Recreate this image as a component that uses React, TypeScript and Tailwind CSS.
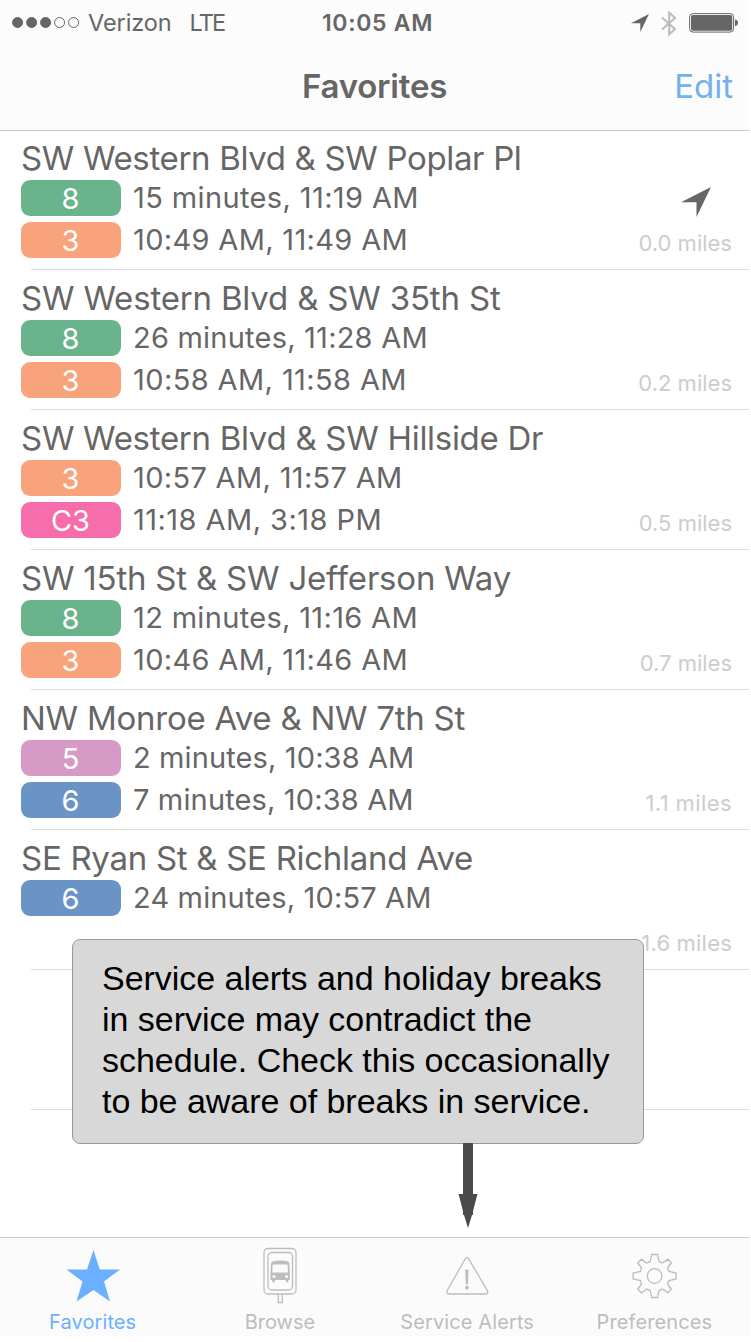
import type { ReactNode } from "react";

type Arrival = { route: string; color: string; times: string; tracking: string };
type Stop = {
  name: string;
  tracking: string;
  arrivals: Arrival[];
  miles: string;
  milesTracking?: string;
  nearest?: boolean;
};

const GREEN = "bg-[#69b48d]";
const ORANGE = "bg-[#f8a37b]";
const PINK = "bg-[#f76dab]";
const MAUVE = "bg-[#d79ac6]";
const BLUE = "bg-[#6a94c6]";

const stops: Stop[] = [
  {
    name: "SW Western Blvd & SW Poplar Pl",
    tracking: "tracking-[-0.34px]",
    miles: "0.0 miles",
    nearest: true,
    arrivals: [
      { route: "8", color: GREEN, times: "15 minutes, 11:19 AM", tracking: "tracking-[0.38px]" },
      { route: "3", color: ORANGE, times: "10:49 AM, 11:49 AM", tracking: "tracking-[0.33px]" },
    ],
  },
  {
    name: "SW Western Blvd & SW 35th St",
    tracking: "tracking-[-0.18px]",
    miles: "0.2 miles",
    arrivals: [
      { route: "8", color: GREEN, times: "26 minutes, 11:28 AM", tracking: "tracking-[0.22px]" },
      { route: "3", color: ORANGE, times: "10:58 AM, 11:58 AM", tracking: "tracking-[0.4px]" },
    ],
  },
  {
    name: "SW Western Blvd & SW Hillside Dr",
    tracking: "tracking-[-0.29px]",
    miles: "0.5 miles",
    arrivals: [
      { route: "3", color: ORANGE, times: "10:57 AM, 11:57 AM", tracking: "tracking-[0.33px]" },
      { route: "C3", color: PINK, times: "11:18 AM, 3:18 PM", tracking: "tracking-[0.45px]" },
    ],
  },
  {
    name: "SW 15th St & SW Jefferson Way",
    tracking: "tracking-[-0.21px]",
    miles: "0.7 miles",
    arrivals: [
      { route: "8", color: GREEN, times: "12 minutes, 11:16 AM", tracking: "tracking-[0.33px]" },
      { route: "3", color: ORANGE, times: "10:46 AM, 11:46 AM", tracking: "tracking-[0.33px]" },
    ],
  },
  {
    name: "NW Monroe Ave & NW 7th St",
    tracking: "tracking-[-0.25px]",
    miles: "1.1 miles",
    milesTracking: "tracking-[0.4px]",
    arrivals: [
      { route: "5", color: MAUVE, times: "2 minutes, 10:38 AM", tracking: "tracking-[0.12px]" },
      { route: "6", color: BLUE, times: "7 minutes, 10:38 AM", tracking: "tracking-[0.15px]" },
    ],
  },
  {
    name: "SE Ryan St & SE Richland Ave",
    tracking: "tracking-[-0.29px]",
    miles: "1.6 miles",
    milesTracking: "tracking-[0.2px]",
    arrivals: [{ route: "6", color: BLUE, times: "24 minutes, 10:57 AM", tracking: "tracking-[0.15px]" }],
  },
];

function LocationArrow({ className }: { className: string }) {
  return (
    <svg viewBox="0 0 30 30" className={className} fill="currentColor">
      <path d="M30 0 15.500 30V15.300H0Z" />
    </svg>
  );
}

function StatusBar() {
  return (
    <div className="grid h-[46px] grid-cols-3 items-center pl-3 pr-[10px] text-[#666]">
      <div className="flex items-center">
        <svg viewBox="0 0 68 12" className="h-3 w-[68px]" fill="currentColor" stroke="currentColor">
          <circle cx="5.600" cy="5.500" r="5" />
          <circle cx="19.600" cy="5.500" r="5" />
          <circle cx="33.600" cy="5.500" r="5" />
          <circle cx="47.600" cy="5.500" r="5" fill="none" />
          <circle cx="61.600" cy="5.500" r="5" fill="none" />
        </svg>
        <span className="ml-2 text-[23.500px] tracking-[-0.1px]">Verizon</span>
        <span className="ml-[18px] text-[23.500px] tracking-[-1.900px]">LTE</span>
      </div>
      <div className="pl-1 text-center text-[23px] font-semibold tracking-[0.700px]">10:05 AM</div>
      <div className="flex items-center justify-end">
        <LocationArrow className="h-[18px] w-[18px]" />
        <svg viewBox="0 0 16 27" className="ml-3 h-[27px] w-4 text-[#bbb]" fill="none" stroke="currentColor" strokeWidth="2">
          <path d="M1 7.500 14 19 8.200 24.500V2.500L14 8 1 19.500" />
        </svg>
        <svg viewBox="0 0 50 20" className="ml-3 h-5 w-[50px]" fill="currentColor">
          <rect x="0.600" y="0.600" width="44" height="18.500" rx="3.500" fill="none" stroke="currentColor" strokeWidth="1" />
          <rect x="2" y="2" width="41.200" height="15.700" rx="2" />
          <path d="M46 6.500C50 6.500 50 13 46 13Z" />
        </svg>
      </div>
    </div>
  );
}

function StopRow({ stop }: { stop: Stop }) {
  return (
    <li className="flex h-[140px] flex-col">
      <div className="flex flex-1 justify-between pl-[21px] pr-[17px]">
        <div className="flex flex-col whitespace-nowrap">
          <h2 className={`h-[50px] text-[33px] leading-[56px] ${stop.tracking}`}>{stop.name}</h2>
          <div className="flex flex-col gap-1.5">
            {stop.arrivals.map((a) => (
              <div key={a.times} className="flex h-9 items-center gap-3 text-[29px]">
                <span className={`h-9 w-[100px] rounded-[9px] pr-px text-center text-[29px] leading-[37px] text-white ${a.color}`}>
                  {a.route}
                </span>
                <span className={`leading-[38px] ${a.tracking}`}>{a.times}</span>
              </div>
            ))}
          </div>
        </div>
        <div className="flex flex-col items-end justify-end pb-3">
          {stop.nearest && <LocationArrow className="mb-3 mr-[21px] h-[30px] w-[30px]" />}
          <span className={`whitespace-nowrap text-[22px] leading-7 text-[#ccc] ${stop.milesTracking ?? "tracking-normal"}`}>
            {stop.miles}
          </span>
        </div>
      </div>
      <div className="ml-[31px] h-px bg-[#dcdcdc]" />
    </li>
  );
}

function Tab({ label, active, children, tracking }: { label: string; active?: boolean; children: ReactNode; tracking: string }) {
  return (
    <div className={`flex flex-1 flex-col items-center pr-[2px] ${active ? "text-[#6bb0ff]" : "text-[#bdbdbd]"}`}>
      <svg viewBox="-30 -38 60 76" className="h-[76px] w-[60px] shrink-0" fill="none" stroke="currentColor" strokeWidth="1.3">
        {children}
      </svg>
      <span className={`-mt-1 whitespace-nowrap text-[20px] leading-6 ${tracking}`}>{label}</span>
    </div>
  );
}

export default function App() {
  return (
    <div className="h-[1342px] w-[751px] bg-white font-['Inter',sans-serif] text-[#666]">
      <div className="relative flex h-[1336px] w-[749px] flex-col overflow-hidden">
        <header className="h-[131px] shrink-0 border-b border-[#c9c9c9] bg-[#fcfcfc]">
          <StatusBar />
          <div className="grid h-[82px] grid-cols-3 items-center px-4">
            <span />
            <h1 className="text-center text-[33px] font-semibold tracking-[-0.2px]">Favorites</h1>
            <span className="text-right text-[33px] text-[#72b0ee]">Edit</span>
          </div>
        </header>

        <ul className="-mt-px flex-1">
          {stops.map((s) => (
            <StopRow key={s.name} stop={s} />
          ))}
          <li className="flex h-[140px] items-end pl-[31px]">
            <div className="h-px flex-1 bg-[#dcdcdc]" />
          </li>
        </ul>

        <nav className="flex h-[99px] shrink-0 border-t border-[#c9c9c9] bg-[#fbfbfb]">
          <Tab label="Favorites" active tracking="tracking-[0.1px]">
            <path stroke="none" fill="currentColor" d="M.4-26 6.800-6.500H27L11 5.500 17 25.500.4 14-16.500 25.500-10.500 5.500-26.500-6.500H-6Z" />
          </Tab>
          <Tab label="Browse" tracking="tracking-[0px]">
            <rect x="-16" y="-27.500" width="32" height="45.500" rx="4" />
            <rect x="-12" y="-23.500" width="24.500" height="37.500" rx="4" />
            <path d="M-1.700 18V26.500H2.300V18" />
            <path
              fill="currentColor"
              stroke="none"
              fillRule="evenodd"
              d="M-7.500-14.500Q.3-16.500 8-14.500 9.300-14 9.300-12L9.800-4V4H8.500Q8.500 6.500 7 6.500 5.500 6.500 5.500 4H-5Q-5 6.500-6.500 6.500-8 6.500-8 4H-9.500V-4L-9-12Q-9-14-7.500-14.500ZM-7.300-11.500-7.800-3.500H8L7.500-11.500ZM-6-1A1.500 1.500 0 1 0-6 2 1.500 1.500 0 1 0-6-1ZM6.500-1A1.500 1.500 0 1 0 6.500 2 1.500 1.500 0 1 0 6.500-1Z"
            />
          </Tab>
          <Tab label="Service Alerts" tracking="tracking-[0.12px]">
            <path d="M-1.700-17.200Q0-19.500 1.700-17.200L20.500 14.800Q21.500 18 18.500 18H-18Q-21-18 18-20 14.800Z" className="hidden" />
            <path d="M-1.700-17.200Q0-19.500 1.700-17.200L20.500 14.800Q21.500 18 18.500 18H-18Q-21 18-20 14.800Z" />
            <path d="M-1.700-6.500H1.500L1 8.500H-1.200Z" fill="currentColor" stroke="none" />
            <circle cx="-.1" cy="11.700" r="1.900" fill="currentColor" stroke="none" />
          </Tab>
          <Tab label="Preferences" tracking="tracking-[0.1px]">
            <g transform="translate(.6 0)">
              <path d="M-3-21.500H3L4.500-14.300 8-13 13.300-16.800 16.800-13.300 13-8 14.300-4.500 21.500-3V3L14.300 4.500 13 8 16.800 13.300 13.300 16.800 8 13 4.500 14.300 3 21.500H-3L-4.500 14.300-8 13-13.300 16.800-16.800 13.300-13 8-14.300 4.500-21.500 3V-3L-14.300-4.500-13-8-16.800-13.300-13.300-16.800-8-13-4.500-14.300Z" />
              <circle r="7.300" />
            </g>
          </Tab>
        </nav>

        <div className="absolute left-[72px] top-[939px] h-[205px] w-[572px] rounded-lg border border-[#999] bg-[#d8d8d8] pl-[29px] pt-[18px] font-['Liberation_Sans',sans-serif] text-[34px] leading-[41px] tracking-[-0.03px] text-black">
          <p className="whitespace-nowrap">Service alerts and holiday breaks</p>
          <p className="whitespace-nowrap">in service may contradict the</p>
          <p className="whitespace-nowrap">schedule. Check this occasionally</p>
          <p className="whitespace-nowrap">to be aware of breaks in service.</p>
        </div>
        <svg viewBox="0 0 20 86" className="absolute left-[458px] top-[1143px] h-[86px] w-5" fill="#4a4a4a">
          <path d="M5 0H15V51H19.500L15 68V72H14L10 85 6 72H5V68L.5 51H5Z" />
        </svg>
      </div>
    </div>
  );
}
